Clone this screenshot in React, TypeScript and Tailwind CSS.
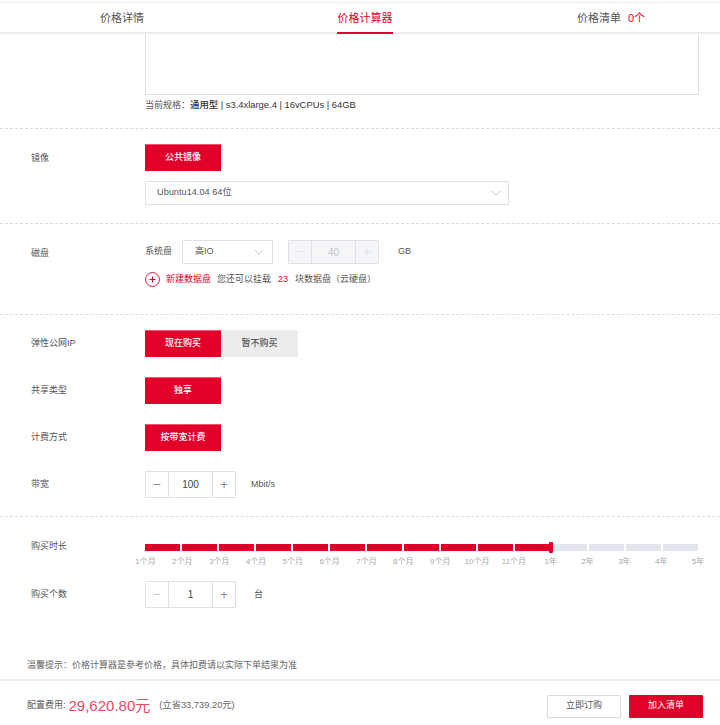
import React from "react";

const font = { fontFamily: '"Liberation Sans","Noto Sans CJK SC",sans-serif' };

function RedBtn({ children }: { children: React.ReactNode }) {
  return (
    <div className="w-[76px] h-[26.5px] flex items-center justify-center bg-[#e1002a] text-white text-[9px] font-medium border-t border-[#f0566f]">
      {children}
    </div>
  );
}

function Label({ children }: { children: React.ReactNode }) {
  return <div className="w-[114px] text-[9px] text-[#555] shrink-0">{children}</div>;
}

function Stepper({ value, dimMinus, disabled }: { value: string; dimMinus?: boolean; disabled?: boolean }) {
  const sign = disabled ? "text-[#dfe1e6]" : "text-[#8a8a8a]";
  return (
    <div className={`flex w-[91px] rounded-[1px] border border-[#dfe1e6] ${disabled ? "h-[24px] bg-[#f5f6f8]" : "h-[27px] bg-white"}`}>
      <div className={`w-[23px] flex items-center justify-center border-r border-[#dfe1e6] text-[13px] ${dimMinus ? "text-[#c8c8c8]" : sign}`}>−</div>
      <div className={`flex-1 flex items-center justify-center text-[10px] ${disabled ? "text-[#c4c6cc]" : "text-[#444]"}`}>{value}</div>
      <div className={`w-[23px] flex items-center justify-center border-l border-[#dfe1e6] text-[13px] ${sign}`}>+</div>
    </div>
  );
}

function Chevron() {
  return (
    <svg width="10" height="6" viewBox="0 0 10 6" fill="none" stroke="#b5b8bf" strokeWidth="0.8">
      <path d="M1 1l4 4 4-4" />
    </svg>
  );
}

const ticks = ["1个月","2个月","3个月","4个月","5个月","6个月","7个月","8个月","9个月","10个月","11个月","1年","2年","3年","4年","5年"];

export default function App() {
  return (
    <div style={font} className="w-[720px] h-[725px] bg-white flex flex-col overflow-hidden">
      <div className="mt-[2px] h-[32px] border-t border-b-2 border-[#ececec] flex text-[11px] text-[#555] shrink-0">
        <div className="w-[244px] pt-[1px] flex items-center justify-center">价格详情</div>
        <div className="w-[242px] flex justify-center">
          <div className="w-[56px] h-[31px] -mb-[2px] pt-[1px] flex items-center justify-center text-[#e1002a] border-b-2 border-[#e1002a]">价格计算器</div>
        </div>
        <div className="pl-[91px] pt-[1px] flex items-center">
          价格清单<span className="ml-[7px] text-[#e1002a]">0个</span>
        </div>
      </div>

      <div className="h-[95px] border-b border-dashed border-[#dcdcdc] pl-[145px] shrink-0">
        <div className="w-[554px] h-[61px] border border-t-0 border-[#dfe1e6]" />
        <div className="mt-[3px] text-[9px] text-[#555]">
          当前规格：<span className="text-[#333] font-medium text-[9.4px]">通用型 | s3.4xlarge.4 | 16vCPUs | 64GB</span>
        </div>
      </div>

      <div className="h-[95px] border-b border-dashed border-[#dcdcdc] pl-[31px] pt-[15px] flex shrink-0">
        <Label><div className="mt-[8px]">镜像</div></Label>
        <div>
          <RedBtn>公共镜像</RedBtn>
          <div className="mt-[10px] w-[364px] h-[24px] border border-[#dfe1e6] flex items-center justify-between pl-[11px] pr-[7px] text-[9.2px] text-[#555]">
            <span>Ubuntu14.04 64位</span>
            <Chevron />
          </div>
        </div>
      </div>

      <div className="h-[91px] border-b border-dashed border-[#dcdcdc] pl-[31px] pt-[16px] flex shrink-0">
        <Label><div className="mt-[7px]">磁盘</div></Label>
        <div>
          <div className="flex items-center h-[24px] text-[9px] text-[#555]">
            <span className="w-[37px]">系统盘</span>
            <div className="w-[91px] h-[24px] border border-[#dfe1e6] flex items-center justify-between pl-[12px] pr-[8px]">
              <span>高IO</span>
              <Chevron />
            </div>
            <div className="ml-[15px]"><Stepper value="40" disabled /></div>
            <span className="ml-[19px]">GB</span>
          </div>
          <div className="mt-[8px] flex items-center text-[9px] text-[#555]">
            <svg width="15" height="15" viewBox="0 0 15 15" fill="none" stroke="#e1002a" strokeWidth="0.9" className="mr-[6px]">
              <circle cx="7.5" cy="7.5" r="7" />
              <path d="M4.5 7.5h6M7.5 4.5v6" strokeWidth="1" />
            </svg>
            <span className="text-[#e1002a]">新建数据盘</span>
            <span className="ml-[6px]">您还可以挂载</span>
            <span className="mx-[7px] text-[#e1002a]">23</span>
            <span>块数据盘（云硬盘）</span>
          </div>
        </div>
      </div>

      <div className="h-[202px] border-b border-dashed border-[#dcdcdc] pl-[31px] pt-[15px] flex flex-col gap-[20.5px] shrink-0">
        <div className="flex items-center">
          <Label>弹性公网IP</Label>
          <RedBtn>现在购买</RedBtn>
          <div className="w-[77px] h-[26.5px] flex items-center justify-center bg-[#ececec] text-[#555] text-[9px] font-medium">暂不购买</div>
        </div>
        <div className="flex items-center">
          <Label>共享类型</Label>
          <RedBtn>独享</RedBtn>
        </div>
        <div className="flex items-center">
          <Label>计费方式</Label>
          <RedBtn>按带宽计费</RedBtn>
        </div>
        <div className="flex items-center">
          <Label>带宽</Label>
          <Stepper value="100" />
          <span className="ml-[15px] text-[9px] text-[#555]">Mbit/s</span>
        </div>
      </div>

      <div className="flex-1 pl-[31px] pt-[23px] relative">
        <div className="flex">
          <Label>购买时长</Label>
          <div className="mt-[4px]">
            <div className="relative flex w-[553px] gap-[1.5px]">
              {ticks.slice(1).map((t, i) => (
                <div key={t} className={`flex-1 h-[7px] ${i < 11 ? "bg-[#e1002a]" : "bg-[#e3e6ec]"}`} />
              ))}
              <div className="absolute left-[404px] -top-[2px] w-[4px] h-[11px] rounded-[1px] bg-[#e1002a]" />
            </div>
            <div className="flex -ml-[18px] mt-[6px]">
              {ticks.map((t) => (
                <div key={t} className="w-[36.85px] shrink-0 text-center text-[8px] leading-[10px] text-[#a8a8a8]">{t}</div>
              ))}
            </div>
          </div>
        </div>
        <div className="flex items-center mt-[14px]">
          <Label>购买个数</Label>
          <Stepper value="1" dimMinus />
          <span className="ml-[18px] text-[9px] text-[#555]">台</span>
        </div>
        <div className="mt-[51px] -ml-[4px] text-[9px] text-[#666]">温馨提示：价格计算器是参考价格，具体扣费请以实际下单结果为准</div>
      </div>

      <div className="h-[46px] border-t-2 border-[#ececec] flex items-center pt-[6px] pl-[27px] pr-[17px] shrink-0">
        <span className="text-[9px] text-[#555]">配置费用:</span>
        <span className="ml-[3px] text-[15px] text-[#e84a5f]">29,620.80元</span>
        <span className="ml-[9px] text-[9.3px] text-[#666]">(立省33,739.20元)</span>
        <div className="ml-auto flex gap-[8px]">
          <div className="w-[74px] h-[23px] border border-[#dcdcdc] rounded-[1px] flex items-center justify-center text-[9px] text-[#555]">立即订购</div>
          <div className="w-[74px] h-[23px] bg-[#e1002a] rounded-[1px] flex items-center justify-center text-[9px] text-white">加入清单</div>
        </div>
      </div>
    </div>
  );
}
